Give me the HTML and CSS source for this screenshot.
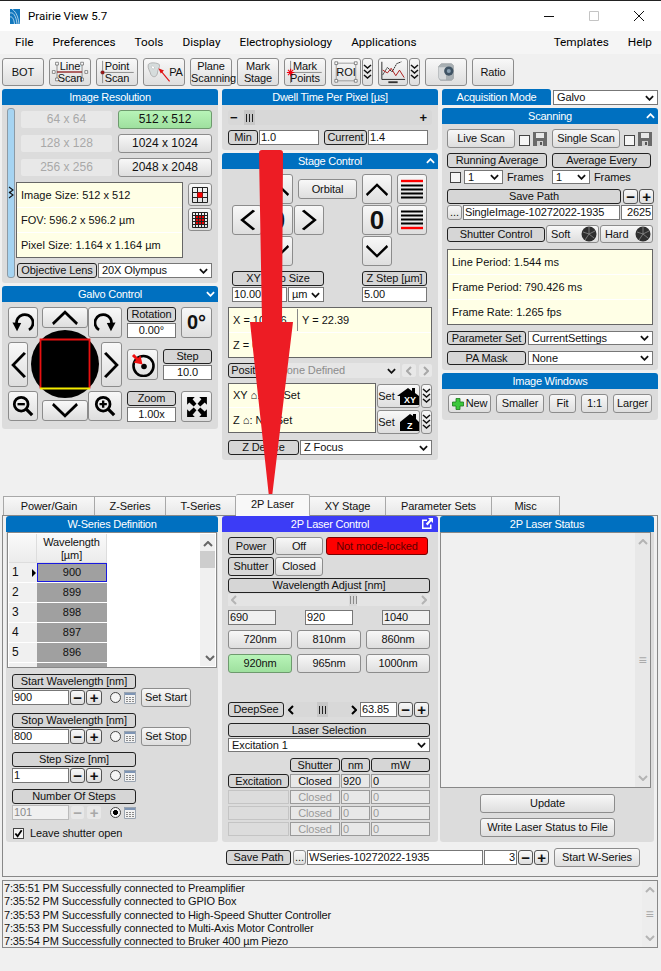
FILE: index.html
```html
<!DOCTYPE html>
<html lang="en">
<head>
    <meta charset="UTF-8">
    <title>Prairie View 5.7</title>
    <link rel="stylesheet" href="styles.css">
</head>
<body>
    <svg class="sprite" aria-hidden="true">
        <symbol id="chev-d" viewBox="0 0 10 6"><polyline points="1,1 5,5 9,1" fill="none" stroke="currentColor" stroke-width="2"/></symbol>
        <symbol id="chev-u" viewBox="0 0 10 6"><polyline points="1,5 5,1 9,5" fill="none" stroke="currentColor" stroke-width="2"/></symbol>
        <symbol id="chev-l" viewBox="0 0 6 10"><polyline points="5,1 1,5 5,9" fill="none" stroke="currentColor" stroke-width="2"/></symbol>
        <symbol id="chev-r" viewBox="0 0 6 10"><polyline points="1,1 5,5 1,9" fill="none" stroke="currentColor" stroke-width="2"/></symbol>
        <symbol id="big-u" viewBox="0 0 30 14" preserveAspectRatio="none"><polyline points="2,13 15,2 28,13" fill="none" stroke="#000" stroke-width="2.800"/></symbol>
        <symbol id="big-d" viewBox="0 0 30 14" preserveAspectRatio="none"><polyline points="2,1 15,12 28,1" fill="none" stroke="#000" stroke-width="2.800"/></symbol>
        <symbol id="big-l" viewBox="0 0 14 30" preserveAspectRatio="none"><polyline points="13,2 2,15 13,28" fill="none" stroke="#000" stroke-width="2.800"/></symbol>
        <symbol id="big-r" viewBox="0 0 14 30" preserveAspectRatio="none"><polyline points="1,2 12,15 1,28" fill="none" stroke="#000" stroke-width="2.800"/></symbol>
        <symbol id="triple" viewBox="0 0 9 16">
            <polyline points="1,1 4.500,4 8,1" fill="none" stroke="#111" stroke-width="1.500"/>
            <polyline points="1,6 4.500,9 8,6" fill="none" stroke="#111" stroke-width="1.500"/>
            <polyline points="1,11 4.500,14 8,11" fill="none" stroke="#111" stroke-width="1.500"/>
        </symbol>
        <symbol id="floppy" viewBox="0 0 14 14">
            <path d="M0 0H14V14H0Z" fill="#6a6a6a"/>
            <path d="M3 1H11V6H3Z" fill="#e8e8e8"/>
            <path d="M4 9H10V14H4Z" fill="#d0d0d0"/>
            <path d="M7 10H9V13H7Z" fill="#555"/>
        </symbol>
        <symbol id="calc" viewBox="0 0 12 12">
            <path d="M0 0H12V12H0Z" fill="#f2f2f2"/>
            <path d="M0 0H12V3H0Z" fill="#7d94b4"/>
            <path d="M0.500 0.500H11.500V11.500H0.500Z" fill="none" stroke="#9aa4b0"/>
            <path d="M2 5h2v1H2zM5 5h2v1H5zM8 5h2v1H8zM2 7h2v1H2zM5 7h2v1H5zM8 7h2v1H8zM2 9h2v1H2zM5 9h2v1H5zM8 9h2v1H8z" fill="#8a8a8a"/>
        </symbol>
        <symbol id="shutter" viewBox="0 0 16 16">
            <circle cx="8" cy="8" r="7.500" fill="#2f2f2f"/>
            <path d="M8 1L8 8M14 5L8 8M13 12L8 8M4 14L8 8M2 6L8 8" stroke="#8a8a8a" stroke-width="0.800"/>
        </symbol>
    </svg>

    <header class="titlebar">
        <svg class="logo" viewBox="0 0 10 15">
            <path d="M0 0H10V15H0Z" fill="#1277bd"/>
            <path d="M0 4C3 3 6 6 7 15M0 8C2 7 4 10 4.500 15M2 0C5 2 8 6 9 15" fill="none" stroke="#cfe6f5" stroke-width="0.800"/>
        </svg>
        <span class="app-name">Prairie View 5.7</span>
        <div class="winctl">
            <svg viewBox="0 0 10 10"><path d="M0 5.500H10" stroke="#111" stroke-width="1"/></svg>
            <svg viewBox="0 0 10 10"><path d="M0.500 0.500H9.500V9.500H0.500Z" fill="none" stroke="#c4c4c4" stroke-width="1"/></svg>
            <svg viewBox="0 0 10 10"><path d="M0 0L10 10M10 0L0 10" stroke="#111" stroke-width="1"/></svg>
        </div>
    </header>

    <nav class="menubar">
        <span>File</span><span>Preferences</span><span>Tools</span><span>Display</span><span>Electrophysiology</span><span>Applications</span>
        <span class="menu-right">Templates</span><span>Help</span>
    </nav>

    <div class="toolbar">
        <button class="btn tool">BOT</button>
        <button class="btn tool">
            <svg class="tool-art" viewBox="0 0 42 28">
                <path d="M7 5V22M34 5V22" stroke="#888"/><path d="M7 14H34" stroke="#8d1a1a" stroke-width="1.400"/>
                <path d="M5.500 3.500h3v3h-3zM32.500 3.500h3v3h-3zM5.500 20.500h3v3h-3zM32.500 20.500h3v3h-3zM2 12.500h3v3H2zM37 12.500h3v3h-3z" fill="#fff" stroke="#555" stroke-width="0.700"/>
            </svg>
            <span class="tool-text">Line<br>Scan</span>
        </button>
        <button class="btn tool">
            <svg class="tool-art" viewBox="0 0 42 28">
                <path d="M5.500 2V26M3 14.500H39" stroke="#888"/><path d="M4 13h3v3H4z" fill="#a11" stroke="#611" stroke-width="0.600"/>
            </svg>
            <span class="tool-text">Point<br>Scan</span>
        </button>
        <button class="btn tool tool-pa">
            <svg class="tool-art" viewBox="0 0 42 28">
                <path d="M4 6C6 3 14 4 16 6C17 9 14 11 14 15C13 20 9 20 7 17C6 13 3 10 4 6Z" fill="#d6dcdc" stroke="#999" stroke-width="0.700"/>
                <path d="M7 8C9 7 11 8 11 10C10 11 8 11 7 8Z" fill="#fff" stroke="#aaa" stroke-width="0.500"/>
                <path d="M27 24L17 12" stroke="#e01010" stroke-width="1.200"/><path d="M15 10L21 12.500L17.500 15.500Z" fill="#e01010"/>
            </svg>
            <span class="tool-text">PA</span>
        </button>
        <button class="btn tool"><span class="tool-text">Plane<br>Scanning</span></button>
        <button class="btn tool"><span class="tool-text">Mark<br>Stage</span></button>
        <button class="btn tool">
            <svg class="tool-art" viewBox="0 0 42 28">
                <path d="M5.500 2V26M3 14.500H39" stroke="#888"/>
                <path d="M5.500 10.500V18.500M1.500 14.500H9.500M2.700 11.700L8.300 17.300M8.300 11.700L2.700 17.300" stroke="#f00010" stroke-width="1.200"/>
            </svg>
            <span class="tool-text">Mark<br>Points</span>
        </button>
        <div class="tool-group">
            <button class="btn tool-sq">
                <svg class="tool-art" viewBox="0 0 30 28">
                    <path d="M4.500 4.500H25.500V23.500H4.500Z" fill="none" stroke="#999"/>
                    <path d="M3 3h3v3H3zM24 3h3v3h-3zM3 22h3v3H3zM24 22h3v3h-3z" fill="#fff" stroke="#555" stroke-width="0.700"/>
                </svg>
                <span class="tool-text">ROI</span>
            </button>
            <button class="btn tool-more"><svg class="triple"><use href="#triple"/></svg></button>
        </div>
        <div class="tool-group">
            <button class="btn tool-sq">
                <svg class="tool-art" viewBox="0 0 30 28">
                    <path d="M3 3V22H28" fill="none" stroke="#222"/>
                    <path d="M4 17L9 9L14 14L19 5L24 3" fill="none" stroke="#222" stroke-dasharray="2 0.600"/>
                    <path d="M4 12L9 15L13 10L18 18L22 12L27 20" fill="none" stroke="#a11"/>
                    <path d="M10 25H20" stroke="#333" stroke-width="2"/>
                </svg>
            </button>
            <button class="btn tool-more"><svg class="triple"><use href="#triple"/></svg></button>
        </div>
        <button class="btn tool">
            <svg class="tool-art" viewBox="0 0 42 28">
                <path d="M13 8L16 5H27L29 7V21L27 23H15L13 20Z" fill="#a9b0b4" stroke="#8a8f92" stroke-width="0.600"/>
                <path d="M13 9H21V22H15L13 20Z" fill="#d5d8da"/>
                <circle cx="24" cy="13" r="5" fill="#3f5364"/><circle cx="24" cy="13" r="2.200" fill="#8aa1b3"/>
            </svg>
        </button>
        <button class="btn tool small-text">Ratio</button>
    </div>

    <div class="upper">
        <div class="col col-left">
            <section class="panel">
                <h2 class="phead">Image Resolution</h2>
                <div class="pbody res-body">
                    <div class="side-bar"><svg class="side-chev" viewBox="0 0 6 14"><path d="M1 1L5 4L1 7M1 6L5 9L1 12" fill="none" stroke="#111" stroke-width="1.100"/></svg></div>
                    <div class="res-main">
                        <div class="res-grid">
                            <button class="btn off">64 x 64</button><button class="btn on">512 x 512</button>
                            <button class="btn off">128 x 128</button><button class="btn">1024 x 1024</button>
                            <button class="btn off">256 x 256</button><button class="btn">2048 x 2048</button>
                        </div>
                        <div class="res-info">
                            <div class="info info-res">
                                <div>Image Size: 512 x 512</div>
                                <div>FOV: 596.2 x 596.2 &micro;m</div>
                                <div>Pixel Size: 1.164 x 1.164 &micro;m</div>
                            </div>
                            <div class="grid-btns">
                                <button class="btn">
                                    <svg class="mini" viewBox="0 0 16 16"><path d="M0.500 0.500H15.500V15.500H0.500ZM5.500 0.500V15.500M10.500 0.500V15.500M0.500 5.500H15.500M0.500 10.500H15.500" fill="none" stroke="#222"/><path d="M5.500 5.500h5v5h-5z" fill="#f00"/></svg>
                                </button>
                                <button class="btn">
                                    <svg class="mini" viewBox="0 0 16 16"><path d="M4 4h8v8H4z" fill="#e00"/><path d="M0.500 0.500H15.500V15.500H0.500ZM3.500 0.500V15.500M6.500 0.500V15.500M9.500 0.500V15.500M12.500 0.500V15.500M0.500 3.500H15.500M0.500 6.500H15.500M0.500 9.500H15.500M0.500 12.500H15.500" fill="none" stroke="#222"/></svg>
                                </button>
                            </div>
                        </div>
                        <div class="obj-row">
                            <div class="lbl">Objective Lens</div>
                            <div class="sel">20X Olympus<svg class="sel-arrow"><use href="#chev-d"/></svg></div>
                        </div>
                    </div>
                </div>
            </section>

            <section class="panel galvo">
                <h2 class="phead">Galvo Control<svg class="fold"><use href="#chev-d"/></svg></h2>
                <div class="pbody galvo-body">
                    <div class="dpad">
                        <button class="btn sq a-rotl">
                            <svg class="ic22" viewBox="0 0 24 24"><path d="M18.500 19.500A9 9 0 1 0 5 13" fill="none" stroke="#000" stroke-width="3"/><path d="M0.500 11.500L10 12L5.500 21Z" fill="#000"/></svg>
                        </button>
                        <button class="btn a-up"><svg class="ic-h"><use href="#big-u"/></svg></button>
                        <button class="btn sq a-rotr">
                            <svg class="ic22" viewBox="0 0 24 24"><path d="M5.500 19.500A9 9 0 1 1 19 13" fill="none" stroke="#000" stroke-width="3"/><path d="M23.500 11.500L14 12L18.500 21Z" fill="#000"/></svg>
                        </button>
                        <button class="btn a-left"><svg class="ic-v"><use href="#big-l"/></svg></button>
                        <div class="a-scope">
                            <svg viewBox="0 0 68 68"><circle cx="34" cy="34" r="34" fill="#000"/>
                                <path d="M9.500 58.500V9.500H58.500V58.500" fill="none" stroke="#e81010" stroke-width="1.800"/>
                                <path d="M9 58.500H59" stroke="#f5ec00" stroke-width="1.800"/></svg>
                        </div>
                        <button class="btn a-right"><svg class="ic-v"><use href="#big-r"/></svg></button>
                        <button class="btn sq a-zout">
                            <svg class="ic22" viewBox="0 0 24 24"><circle cx="10" cy="10" r="7.500" fill="none" stroke="#000" stroke-width="3"/><path d="M15.500 15.500L22 22" stroke="#000" stroke-width="3.500"/><path d="M6 10H14" stroke="#000" stroke-width="2.600"/></svg>
                        </button>
                        <button class="btn a-down"><svg class="ic-h"><use href="#big-d"/></svg></button>
                        <button class="btn sq a-zin">
                            <svg class="ic22" viewBox="0 0 24 24"><circle cx="10" cy="10" r="7.500" fill="none" stroke="#000" stroke-width="3"/><path d="M15.500 15.500L22 22" stroke="#000" stroke-width="3.500"/><path d="M6 10H14M10 6V14" stroke="#000" stroke-width="2.600"/></svg>
                        </button>
                    </div>
                    <div class="galvo-side">
                        <div class="galvo-row">
                            <div class="lv"><div class="lbl">Rotation</div><div class="field center">0.00&deg;</div></div>
                            <button class="btn degree">0&deg;</button>
                        </div>
                        <div class="galvo-row">
                            <button class="btn degree">
                                <svg class="ic24" viewBox="0 0 24 24"><circle cx="12.500" cy="13" r="10" fill="none" stroke="#000" stroke-width="2.600"/><circle cx="13" cy="13.500" r="2.800" fill="#000"/><path d="M2 2L9 9" stroke="#f01010" stroke-width="3"/><path d="M11.500 11.500L2.500 9.500L9.500 2.500Z" fill="#f01010"/></svg>
                            </button>
                            <div class="lv"><div class="lbl">Step</div><div class="field center">10.0</div></div>
                        </div>
                        <div class="galvo-row">
                            <div class="lv"><div class="lbl">Zoom</div><div class="field center">1.00x</div></div>
                            <button class="btn degree">
                                <svg class="ic22" viewBox="0 0 20 20"><path d="M1 1H8L6 3L9.500 7L7 9.500L3 6L1 8ZM19 1V8L17 6L13 9.500L10.500 7L14 3L12 1ZM1 19V12L3 14L7 10.500L9.500 13L6 17L8 19ZM19 19H12L14 17L10.500 13L13 10.500L17 14L19 12Z" fill="#000"/></svg>
                            </button>
                        </div>
                    </div>
                </div>
            </section>
        </div>

        <div class="col col-mid">
            <section class="panel">
                <h2 class="phead">Dwell Time Per Pixel [&micro;s]</h2>
                <div class="pbody dwell-body">
                    <div class="hscroll dwell-scroll"><b>&minus;</b><span class="thumb thumb-start"></span><b class="to-end">+</b></div>
                    <div class="dwell-row">
                        <div class="lbl">Min</div><div class="field">1.0</div>
                        <div class="lbl">Current</div><div class="field">1.4</div>
                    </div>
                </div>
            </section>

            <section class="panel stage">
                <h2 class="phead">Stage Control<svg class="fold"><use href="#chev-u"/></svg></h2>
                <div class="pbody stage-body">
                    <div class="motor">
                        <button class="btn m-xyup"><svg class="ic-h"><use href="#big-u"/></svg></button>
                        <button class="btn m-orbital">Orbital</button>
                        <button class="btn m-zup"><svg class="ic-h"><use href="#big-u"/></svg></button>
                        <button class="btn m-top">
                            <svg class="ic22" viewBox="0 0 22 22"><path d="M0 3H22" stroke="#f00" stroke-width="2.400"/><path d="M0 7.500H22M0 11.500H22M0 15.500H22M0 19.500H22" stroke="#000" stroke-width="2.200"/></svg>
                        </button>
                        <button class="btn m-left"><svg class="ic-v"><use href="#big-l"/></svg></button>
                        <button class="btn m-zero big-zero">0</button>
                        <button class="btn m-right"><svg class="ic-v"><use href="#big-r"/></svg></button>
                        <button class="btn m-zzero big-zero">0</button>
                        <button class="btn m-bottom">
                            <svg class="ic22" viewBox="0 0 22 22"><path d="M0 2.500H22M0 6.500H22M0 10.500H22M0 14.500H22" stroke="#000" stroke-width="2.200"/><path d="M0 19H22" stroke="#f00" stroke-width="2.400"/></svg>
                        </button>
                        <button class="btn m-xydown"><svg class="ic-h"><use href="#big-d"/></svg></button>
                        <button class="btn m-zdown"><svg class="ic-h"><use href="#big-d"/></svg></button>
                    </div>
                    <div class="step-row">
                        <div class="step-xy">
                            <div class="lbl">XY Step Size</div>
                            <div class="step-fields">
                                <div class="field">10.00</div>
                                <div class="sel">&micro;m<svg class="sel-arrow"><use href="#chev-d"/></svg></div>
                            </div>
                        </div>
                        <div class="step-z">
                            <div class="lbl">Z Step [&micro;m]</div>
                            <div class="field step-zval">5.00</div>
                        </div>
                    </div>
                    <div class="info readout">
                        <div class="readout-xy"><span class="read-x">X = 105.06</span><span>Y = 22.39</span></div>
                        <div>Z = 0.00</div>
                    </div>
                    <div class="pos-row">
                        <div class="lbl lbl-pos">Position</div>
                        <div class="sel disabled">None Defined<svg class="sel-arrow"><use href="#chev-d"/></svg></div>
                        <button class="btn pos-nav off"><svg class="tiny-v"><use href="#chev-l"/></svg></button>
                        <button class="btn pos-nav off"><svg class="tiny-v"><use href="#chev-r"/></svg></button>
                    </div>
                    <div class="home-row">
                        <div class="info home-box">
                            <div>XY &#8962;: Not Set</div>
                            <div>Z &#8962;: Not Set</div>
                        </div>
                        <div class="home-btns">
                            <button class="btn home-set">Set
                                <svg class="house" viewBox="0 0 22 18"><path d="M0 9L11 1L15 4V1H18V6L22 9V18H3V9Z" fill="#000"/><text x="7" y="16" class="house-text">XY</text></svg>
                            </button>
                            <button class="btn tool-more"><svg class="triple"><use href="#triple"/></svg></button>
                            <button class="btn home-set">Set
                                <svg class="house" viewBox="0 0 22 18"><path d="M3 9L13 1L16 3V1H19V6L22 9V18H3Z" fill="#000"/><text x="10" y="16" class="house-text">Z</text></svg>
                            </button>
                            <button class="btn tool-more"><svg class="triple"><use href="#triple"/></svg></button>
                        </div>
                    </div>
                    <div class="zdev-row">
                        <div class="lbl">Z Device</div>
                        <div class="sel">Z Focus<svg class="sel-arrow"><use href="#chev-d"/></svg></div>
                    </div>
                </div>
            </section>
        </div>

        <div class="col col-right">
            <div class="acq">
                <div class="phead acq-head">Acquisition Mode</div>
                <div class="sel acq-sel">Galvo<svg class="sel-arrow"><use href="#chev-d"/></svg></div>
            </div>
            <section class="panel scanning">
                <h2 class="phead">Scanning<svg class="fold"><use href="#chev-u"/></svg></h2>
                <div class="pbody scan-body">
                    <div class="scan-row">
                        <button class="btn scan-btn">Live Scan</button><span class="check"></span><svg class="floppy"><use href="#floppy"/></svg>
                        <button class="btn scan-btn">Single Scan</button><span class="check"></span><svg class="floppy"><use href="#floppy"/></svg>
                    </div>
                    <div class="avg-row">
                        <div class="lbl">Running Average</div><div class="lbl">Average Every</div>
                    </div>
                    <div class="frames-row">
                        <span class="check"></span>
                        <div class="sel">1<svg class="sel-arrow"><use href="#chev-d"/></svg></div>
                        <span class="frames-text">Frames</span>
                        <div class="sel">1<svg class="sel-arrow"><use href="#chev-d"/></svg></div>
                        <span>Frames</span>
                    </div>
                    <div class="path-row">
                        <div class="lbl">Save Path</div>
                        <button class="btn pm">&minus;</button><button class="btn pm">+</button>
                    </div>
                    <div class="path-fields">
                        <button class="btn dots">...</button>
                        <div class="field">SingleImage-10272022-1935</div>
                        <div class="field right">2625</div>
                    </div>
                    <div class="shutter-row">
                        <div class="lbl">Shutter Control</div>
                        <button class="btn shut-btn">Soft<svg class="shut"><use href="#shutter"/></svg></button>
                        <button class="btn shut-btn">Hard<svg class="shut"><use href="#shutter"/></svg></button>
                    </div>
                    <div class="info scan-info">
                        <div>Line Period: 1.544 ms</div>
                        <div>Frame Period: 790.426 ms</div>
                        <div>Frame Rate: 1.265 fps</div>
                    </div>
                    <div class="param-row">
                        <div class="lbl">Parameter Set</div>
                        <div class="sel">CurrentSettings<svg class="sel-arrow"><use href="#chev-d"/></svg></div>
                    </div>
                    <div class="param-row">
                        <div class="lbl">PA Mask</div>
                        <div class="sel">None<svg class="sel-arrow"><use href="#chev-d"/></svg></div>
                    </div>
                </div>
            </section>
            <section class="panel windows">
                <h2 class="phead">Image Windows</h2>
                <div class="pbody windows-body">
                    <button class="btn win-new"><svg class="plus-green" viewBox="0 0 12 12"><path d="M4 0.500H8V4H11.500V8H8V11.500H4V8H0.500V4H4Z" fill="#3cc83c" stroke="#1d7a1d" stroke-width="0.800"/></svg>New</button>
                    <button class="btn win-smaller">Smaller</button>
                    <button class="btn win-fit">Fit</button>
                    <button class="btn win-fit">1:1</button>
                    <button class="btn win-larger">Larger</button>
                </div>
            </section>
        </div>
    </div>

    <div class="tabs">
        <div class="tab t1">Power/Gain</div>
        <div class="tab t2">Z-Series</div>
        <div class="tab t3">T-Series</div>
        <div class="tab tab-active">2P Laser</div>
        <div class="tab t5">XY Stage</div>
        <div class="tab t6">Parameter Sets</div>
        <div class="tab t7">Misc</div>
    </div>

    <div class="tabpage">
        <div class="tab-cols">
            <section class="panel">
                <h2 class="phead">W-Series Definition</h2>
                <div class="pbody wseries">
                    <div class="wtable">
                        <div class="wgrid">
                            <div class="wcorner"></div><div class="whead">Wavelength<br>[&micro;m]</div>
                            <div class="wrow-head"><span>1</span><span class="row-mark"></span></div><div class="wcell wcell-sel">900</div>
                            <div class="wrow-head"><span>2</span></div><div class="wcell">899</div>
                            <div class="wrow-head"><span>3</span></div><div class="wcell">898</div>
                            <div class="wrow-head"><span>4</span></div><div class="wcell">897</div>
                            <div class="wrow-head"><span>5</span></div><div class="wcell">896</div>
                            <div class="wrow-head"></div><div class="wcell"></div>
                        </div>
                        <div class="vscroll">
                            <svg class="tiny-h"><use href="#chev-u"/></svg>
                            <span class="vthumb"></span>
                            <svg class="tiny-h to-end"><use href="#chev-d"/></svg>
                        </div>
                    </div>

                    <div class="wblock">
                        <div class="lbl">Start Wavelength [nm]</div><span></span>
                        <div class="wctl">
                            <div class="field">900</div><button class="btn pm">&minus;</button><button class="btn pm">+</button>
                            <span class="radio"></span><svg class="calc"><use href="#calc"/></svg>
                        </div>
                        <button class="btn wset">Set Start</button>
                    </div>
                    <div class="wblock">
                        <div class="lbl">Stop Wavelength [nm]</div><span></span>
                        <div class="wctl">
                            <div class="field">800</div><button class="btn pm">&minus;</button><button class="btn pm">+</button>
                            <span class="radio"></span><svg class="calc"><use href="#calc"/></svg>
                        </div>
                        <button class="btn wset">Set Stop</button>
                    </div>
                    <div class="wblock">
                        <div class="lbl">Step Size [nm]</div><span></span>
                        <div class="wctl">
                            <div class="field">1</div><button class="btn pm">&minus;</button><button class="btn pm">+</button>
                            <span class="radio"></span><svg class="calc"><use href="#calc"/></svg>
                        </div>
                    </div>
                    <div class="wblock">
                        <div class="lbl">Number Of Steps</div><span></span>
                        <div class="wctl">
                            <div class="field field-off">101</div><button class="btn pm off">&minus;</button><button class="btn pm off">+</button>
                            <span class="radio radio-on"></span><svg class="calc"><use href="#calc"/></svg>
                        </div>
                    </div>
                    <div class="leave">
                        <span class="check check-on"><svg viewBox="0 0 10 10"><path d="M1.500 5L4 8L8.500 1.500" fill="none" stroke="#000" stroke-width="2"/></svg></span>
                        Leave shutter open
                    </div>
                </div>
            </section>

            <section class="panel">
                <h2 class="phead phead-laser">2P Laser Control
                    <svg class="popout" viewBox="0 0 13 13"><path d="M1 2.500H6V4H2.500V10.500H9V7.500H10.500V12H1Z" fill="#fff"/><path d="M7 1H12V6L10.200 4.300L6.500 8.500L4.800 6.800L8.700 2.800Z" fill="#fff"/></svg>
                </h2>
                <div class="pbody laser">
                    <div class="power-row">
                        <div class="lbl">Power</div><button class="btn">Off</button><button class="btn lock-alert">Not mode-locked</button>
                    </div>
                    <div class="power-row shutter2">
                        <div class="lbl">Shutter</div><button class="btn">Closed</button>
                    </div>
                    <div class="lbl wl-adjust">Wavelength Adjust [nm]</div>
                    <div class="hscroll wl-scroll">
                        <svg class="tiny-v dim"><use href="#chev-l"/></svg>
                        <span class="thumb thumb-wl"></span>
                        <svg class="tiny-v dim"><use href="#chev-r"/></svg>
                    </div>
                    <div class="wl-fields">
                        <div class="field field-grey">690</div><div class="field">920</div><div class="field field-grey">1040</div>
                    </div>
                    <div class="wl-btns">
                        <button class="btn">720nm</button><button class="btn">810nm</button><button class="btn">860nm</button>
                        <button class="btn on">920nm</button><button class="btn">965nm</button><button class="btn">1000nm</button>
                    </div>
                    <div class="deep-row">
                        <div class="lbl">DeepSee</div>
                        <div class="hscroll deep-scroll">
                            <svg class="tiny-v"><use href="#chev-l"/></svg>
                            <span class="thumb thumb-deep"></span>
                            <svg class="tiny-v"><use href="#chev-r"/></svg>
                        </div>
                        <div class="field">63.85</div>
                        <button class="btn pm">&minus;</button><button class="btn pm">+</button>
                    </div>
                    <div class="lbl las-title">Laser Selection</div>
                    <div class="sel las-sel">Excitation 1<svg class="sel-arrow"><use href="#chev-d"/></svg></div>
                    <div class="las-table">
                        <span></span><div class="lbl">Shutter</div><div class="lbl">nm</div><div class="lbl">mW</div>
                        <div class="lbl">Excitation</div><div class="cell center">Closed</div><div class="cell">920</div><div class="cell">0</div>
                        <div class="cell"></div><div class="cell center dimmed">Closed</div><div class="cell dimmed">0</div><div class="cell dimmed">0</div>
                        <div class="cell"></div><div class="cell center dimmed">Closed</div><div class="cell dimmed">0</div><div class="cell dimmed">0</div>
                        <div class="cell"></div><div class="cell center dimmed">Closed</div><div class="cell dimmed">0</div><div class="cell dimmed">0</div>
                    </div>
                </div>
            </section>

            <section class="panel">
                <h2 class="phead">2P Laser Status</h2>
                <div class="pbody status">
                    <div class="status-box">
                        <div class="vscroll status-scroll">
                            <svg class="tiny-h dim"><use href="#chev-u"/></svg>
                            <span class="grip">&equiv;</span>
                            <svg class="tiny-h dim"><use href="#chev-d"/></svg>
                        </div>
                    </div>
                    <button class="btn status-btn">Update</button>
                    <button class="btn status-btn">Write Laser Status to File</button>
                </div>
            </section>
        </div>

        <div class="save-row">
            <div class="lbl">Save Path</div>
            <button class="btn dots">...</button>
            <div class="field">WSeries-10272022-1935</div>
            <div class="field right">3</div>
            <button class="btn pm">&minus;</button><button class="btn pm">+</button>
            <button class="btn start">Start W-Series</button>
        </div>
    </div>

    <div class="log">
        <div class="log-lines">
            <div>7:35:51 PM Successfully connected to Preamplifier</div>
            <div>7:35:52 PM Successfully connected to GPIO Box</div>
            <div>7:35:53 PM Successfully connected to High-Speed Shutter Controller</div>
            <div>7:35:53 PM Successfully connected to Multi-Axis Motor Controller</div>
            <div>7:35:54 PM Successfully connected to Bruker 400 &micro;m Piezo</div>
        </div>
        <div class="vscroll log-scroll">
            <svg class="tiny-h dim"><use href="#chev-u"/></svg>
            <span class="grip">&equiv;</span>
            <svg class="tiny-h dim"><use href="#chev-d"/></svg>
        </div>
    </div>

    <!-- the red annotation arrow sits on top of everything -->
    <svg class="arrow" viewBox="0 0 661 971"><path d="M259 153Q259 150 262 150H280Q283 150 283 153L282 322H293L272 497H269L250 322H262Z" fill="#ed1c24"/></svg>
</body>
</html>
```

FILE: styles.css
```css
* {
    box-sizing: border-box;
}
body {
    position: relative;
    width: 661px;
    height: 971px;
    margin: 0;
    overflow: hidden;
    background-color: #f0f0f0;
    color: #111;
    font-family: "Liberation Sans", Arial, sans-serif;
    font-size: 11px;
    line-height: 13px;
    letter-spacing: -0.1px;
}
.sprite {
    display: none;
}
.arrow {
    position: absolute;
    top: 0;
    left: 0;
    width: 661px;
    height: 971px;
    pointer-events: none;
}

/* window chrome */
.titlebar {
    display: flex;
    align-items: center;
    height: 31px;
    padding-left: 10px;
    border-top: 1px solid #222;
    background-color: #fff;
}
.logo {
    width: 10px;
    height: 15px;
}
.app-name {
    margin-left: 8px;
    font-family: Roboto, sans-serif;
    font-size: 11.500px;
    letter-spacing: 0;
    color: #000;
}
.winctl {
    display: flex;
    gap: 35px;
    margin-left: auto;
    margin-right: 17px;
}
.winctl svg {
    width: 10px;
    height: 10px;
}
.menubar {
    display: flex;
    gap: 19px;
    align-items: center;
    height: 23px;
    padding: 0 9px 0 15px;
    background-color: #f5f5f5;
    font-family: Roboto, sans-serif;
    font-size: 11.800px;
    letter-spacing: 0;
    color: #000;
}
.menu-right {
    margin-left: auto;
}
.toolbar {
    display: flex;
    gap: 5px;
    height: 34px;
    padding: 4px 0 0 2px;
}
.tool-group {
    display: flex;
    gap: 1px;
}

/* controls */
.btn {
    display: block;
    margin: 0;
    padding: 0;
    border: 1px solid #8c8c8c;
    border-radius: 3px;
    background: linear-gradient(#f8f8f8, #dedede);
    color: #111;
    font: inherit;
    letter-spacing: inherit;
    text-align: center;
}
.btn.off {
    border-color: #dcdcdc;
    background: #e8e8e8;
    color: #a8a8a8;
}
.btn.on {
    border-color: #6e9a6e;
    background: linear-gradient(#b8f4b8, #9ee09e);
}
.lbl {
    height: 15px;
    border: 1px solid #222;
    border-radius: 3px;
    background-color: #d6d6d6;
    text-align: center;
    line-height: 13px;
    white-space: nowrap;
    overflow: hidden;
}
.field {
    height: 15px;
    padding: 0 1px;
    border: 1px solid #777;
    background-color: #fff;
    line-height: 13px;
    white-space: nowrap;
    overflow: hidden;
}
.field.center,
.cell.center {
    text-align: center;
}
.field.right {
    text-align: right;
}
.field-off {
    border-color: #bbb;
    background-color: #f0f0f0;
    color: #8a8a8a;
}
.field-grey {
    background-color: #f0f0f0;
}
.sel {
    display: flex;
    align-items: center;
    justify-content: space-between;
    height: 15px;
    padding: 0 3px;
    border: 1px solid #777;
    background-color: #fff;
    white-space: nowrap;
    overflow: hidden;
}
.sel.disabled {
    border-color: #e6e6e6;
    background-color: #e6e6e6;
    color: #8c8c8c;
}
.sel-arrow {
    flex: none;
    width: 9px;
    height: 6px;
    color: #111;
}
.info {
    border: 1px solid #666;
    background-color: #ffffe6;
}
.info > div {
    display: flex;
    align-items: center;
    padding-left: 4px;
    border-bottom: 1px solid #fff;
}
.info > div:last-child {
    border-bottom: 0;
}
.check {
    display: inline-block;
    flex: none;
    width: 11px;
    height: 11px;
    border: 1px solid #444;
    background-color: #f5f5f5;
}
.floppy {
    flex: none;
    width: 14px;
    height: 14px;
}
.pm {
    width: 15px;
    height: 15px;
    font-size: 15px;
    font-weight: bold;
    line-height: 12px;
    border-color: #555;
}
.dots {
    width: 15px;
    height: 15px;
    line-height: 11px;
}
.triple {
    display: block;
    width: 9px;
    height: 16px;
    margin: auto;
}
.ic22 {
    display: block;
    width: 22px;
    height: 22px;
    margin: auto;
}
.ic24 {
    display: block;
    width: 24px;
    height: 24px;
    margin: auto;
}
.ic-h {
    display: block;
    width: 28px;
    height: 15px;
    margin: auto;
}
.ic-v {
    display: block;
    width: 15px;
    height: 28px;
    margin: auto;
}
.tiny-v {
    display: block;
    width: 6px;
    height: 10px;
    margin: auto;
}
.tiny-h {
    display: block;
    flex: none;
    width: 10px;
    height: 6px;
}
.dim {
    color: #b4b4b4;
}
.hscroll {
    display: flex;
    align-items: center;
    background-color: #d8d8d8;
}
/* three grip bars in the middle of a scrollbar thumb */
.thumb {
    display: block;
    background-color: #c8c8c8;
    background-image: repeating-linear-gradient(90deg, #222 0 1px, transparent 1px 3px);
    background-position: center;
    background-repeat: no-repeat;
    background-size: 7px 8px;
}
.vscroll {
    display: flex;
    flex-direction: column;
    align-items: center;
    flex: none;
    width: 15px;
    background-color: #f0f0f0;
}
.grip {
    margin: auto 0;
    color: #aaa;
    font-size: 14px;
}

/* toolbar buttons */
.tool {
    position: relative;
    width: 42px;
    height: 28px;
    line-height: 12px;
}
.tool-sq {
    position: relative;
    width: 30px;
    height: 28px;
}
.tool-more {
    width: 11px;
    height: 28px;
}
.tool-art {
    position: absolute;
    top: 0;
    left: 0;
    width: 100%;
    height: 100%;
}
.tool-text {
    position: relative;
}
.tool-pa .tool-text {
    display: block;
    margin-left: 24px;
}

/* layout of the upper part */
.upper {
    display: flex;
    gap: 4px;
    height: 407px;
    padding-left: 2px;
}
.col {
    width: 216px;
    padding-top: 1px;
}
.phead {
    position: relative;
    height: 16px;
    margin: 0;
    border-radius: 3px 3px 0 0;
    background-color: #0070c0;
    color: #fff;
    font-size: 11px;
    font-weight: normal;
    letter-spacing: -0.250px;
    line-height: 16px;
    text-align: center;
}
.phead-laser {
    background-color: #3c3cf6;
}
.pbody {
    border-radius: 0 0 3px 3px;
    background-color: #dcdcdc;
}
.fold {
    position: absolute;
    top: 5px;
    right: 3px;
    width: 9px;
    height: 6px;
    color: #fff;
}
.popout {
    position: absolute;
    top: 1px;
    right: 4px;
    width: 13px;
    height: 13px;
}

/* image resolution */
.res-body {
    display: flex;
    height: 178px;
    padding: 3px 0 0 5px;
}
.side-bar {
    display: flex;
    align-items: center;
    flex: none;
    width: 8px;
    height: 170px;
    border: 1px solid #8c9aa5;
    border-radius: 3px;
    background-color: #a6d4f2;
}
.side-chev {
    width: 6px;
    height: 14px;
}
.res-main {
    width: 196px;
    margin-left: 1px;
}
.res-grid {
    display: grid;
    grid-template-columns: 93px 94px;
    grid-auto-rows: 19px;
    gap: 5px;
    margin: 2px 0 0 4px;
    font-size: 12px;
    letter-spacing: 0;
}
.res-info {
    display: flex;
    gap: 5px;
    margin-top: 5px;
    letter-spacing: 0;
}
.info-res {
    width: 167px;
    height: 76px;
}
.info-res > div,
.scan-info > div {
    height: 25px;
}
.grid-btns {
    display: flex;
    flex-direction: column;
    gap: 2px;
    padding-top: 1px;
}
.grid-btns .btn {
    width: 24px;
    height: 23px;
}
.mini {
    display: block;
    width: 16px;
    height: 16px;
    margin: auto;
}
.obj-row {
    display: grid;
    grid-template-columns: 80px 114px;
    gap: 1px;
    margin: 5px 0 0 1px;
}

/* galvo */
.galvo {
    margin-top: 3px;
}
.galvo-body {
    display: flex;
    gap: 5px;
    height: 127px;
    padding: 5px 0 0 6px;
}
.dpad {
    display: grid;
    grid-template-columns: 20px 10px 4px 46px 3px 10px 21px;
    grid-template-rows: 21px 10px 4px 45px 4px 9px 21px;
    width: 114px;
    height: 114px;
}
.a-rotl { grid-area: 1 / 1 / 3 / 3; }
.a-up { grid-area: 1 / 4 / 2 / 5; }
.a-rotr { grid-area: 1 / 5 / 3 / 8; }
.a-left { grid-area: 4 / 1 / 5 / 2; }
.a-right { grid-area: 4 / 7 / 5 / 8; }
.a-zout { grid-area: 6 / 1 / 8 / 3; }
.a-down { grid-area: 7 / 4 / 8 / 5; }
.a-zin { grid-area: 6 / 5 / 8 / 8; }
.a-scope {
    grid-area: 2 / 1 / 7 / 8;
    justify-self: center;
    align-self: center;
    width: 68px;
    height: 68px;
}
.a-scope svg {
    display: block;
}
.galvo-side {
    display: flex;
    flex-direction: column;
    gap: 11px;
    width: 85px;
}
.galvo-row {
    display: flex;
    justify-content: space-between;
}
.lv {
    display: flex;
    flex-direction: column;
    gap: 1px;
    width: 49px;
}
.degree {
    width: 31px;
    height: 31px;
    font-size: 20px;
    font-weight: bold;
}

/* dwell */
.dwell-body {
    height: 45px;
    padding: 5px 6px;
}
.dwell-scroll {
    height: 15px;
    padding: 0 5px 0 2px;
    border-radius: 3px;
}
.dwell-scroll b {
    font-size: 13px;
    line-height: 13px;
}
.to-end {
    margin-left: auto;
}
.thumb-start {
    width: 11px;
    height: 15px;
    margin-left: 6px;
}
.dwell-row {
    display: grid;
    grid-template-columns: 30px 60px 47px 60px;
    column-gap: 1px;
    margin-top: 5px;
}
.dwell-row .lbl:nth-child(3) {
    margin-left: 4px;
    width: 43px;
}

/* stage */
.stage {
    margin-top: 3px;
}
.stage-body {
    height: 291px;
    padding: 0 6px;
}
.motor {
    display: grid;
    grid-template-columns: 30px 30px 30px 36px 30px 3px 30px;
    grid-auto-rows: 30px;
    gap: 1px;
    padding: 5px 0 0 4px;
}
.motor .big-zero {
    font-size: 26px;
    font-weight: bold;
    line-height: 28px;
}
.motor .ic-h {
    width: 24px;
    height: 13px;
}
.motor .ic-v {
    width: 15px;
    height: 22px;
}
.m-xyup { grid-area: 1 / 2; }
.m-orbital {
    grid-area: 1 / 3 / 2 / 5;
    align-self: center;
    height: 20px;
    margin: 0 4px;
}
.m-zup { grid-area: 1 / 5; }
.m-top { grid-area: 1 / 7; }
.m-left { grid-area: 2 / 1; }
.m-zero { grid-area: 2 / 2; }
.m-right { grid-area: 2 / 3; }
.m-zzero { grid-area: 2 / 5; }
.m-bottom { grid-area: 2 / 7; }
.m-xydown { grid-area: 3 / 2; }
.m-zdown { grid-area: 3 / 5; }
.step-row {
    display: flex;
    gap: 38px;
    margin: 5px 0 0 4px;
}
.step-xy {
    width: 92px;
}
.step-z {
    width: 65px;
}
.step-fields {
    display: grid;
    grid-template-columns: 55px 36px;
    gap: 1px;
    margin-top: 1px;
}
.step-zval {
    margin-top: 1px;
}
.readout {
    height: 51px;
    margin-top: 5px;
    letter-spacing: 0;
}
.readout > div {
    height: 25px;
}
.read-x {
    width: 65px;
    margin-right: 4px;
    border-right: 1px solid #888;
    line-height: 22px;
}
.readout-xy {
    align-items: center;
}
.pos-row {
    display: grid;
    grid-template-columns: 45px 126px 16px 15px;
    gap: 1px;
    margin-top: 5px;
}
.pos-row .sel {
    margin-left: 1px;
}
.pos-nav {
    height: 15px;
}
.home-row {
    display: flex;
    gap: 1px;
    margin-top: 5px;
    letter-spacing: 0;
}
.home-box {
    width: 148px;
    height: 50px;
}
.home-box > div {
    height: 24px;
}
.home-btns {
    display: grid;
    grid-template-columns: 43px 11px;
    grid-auto-rows: 24px;
    gap: 2px 1px;
    padding-top: 1px;
}
.home-btns .tool-more {
    height: 24px;
}
.home-set {
    display: flex;
    align-items: center;
    justify-content: center;
    gap: 2px;
}
.house {
    width: 22px;
    height: 18px;
}
.house-text {
    fill: #fff;
    font-size: 9px;
    font-weight: bold;
}
.zdev-row {
    display: grid;
    grid-template-columns: 71px 132px;
    gap: 1px;
    margin-top: 6px;
}

/* scanning */
.acq {
    display: flex;
    gap: 2px;
}
.acq-head {
    width: 109px;
}
.acq-sel {
    width: 105px;
    margin-top: 1px;
}
.scanning {
    margin-top: 3px;
}
.scan-body {
    height: 246px;
    padding: 5px 0 0 5px;
}
.scan-row {
    display: flex;
    align-items: flex-end;
    height: 19px;
}
.scan-btn {
    width: 68px;
    height: 19px;
    margin-left: 5px;
}
.scan-row .scan-btn:first-child {
    margin-left: 0;
}
.scan-row .check {
    margin: 0 3px 2px 4px;
}
.scan-row .floppy {
    margin-bottom: 2px;
}
.avg-row {
    display: grid;
    grid-template-columns: 100px 99px;
    gap: 5px;
    margin-top: 5px;
}
.frames-row {
    display: flex;
    align-items: center;
    height: 14px;
    margin: 2px 0 0 3px;
}
.frames-row .sel:nth-child(2) {
    width: 39px;
    margin: 0 4px 0 3px;
}
.frames-row .sel:nth-child(4) {
    width: 38px;
    margin-right: 4px;
}
.frames-row .sel {
    height: 14px;
}
.frames-text {
    width: 45px;
}
.path-row {
    display: flex;
    gap: 1px;
    margin-top: 5px;
}
.path-row .lbl {
    width: 174px;
    margin-right: 1px;
}
.path-fields {
    display: grid;
    grid-template-columns: 15px 157px 32px;
    gap: 1px;
    margin-top: 1px;
}
.shutter-row {
    display: flex;
    align-items: center;
    gap: 1px;
    height: 18px;
    margin-top: 5px;
}
.shutter-row .lbl {
    width: 98px;
}
.shut-btn {
    display: flex;
    align-items: center;
    justify-content: space-between;
    width: 53px;
    height: 18px;
    padding: 0 1px 0 4px;
}
.shut {
    width: 16px;
    height: 16px;
}
.scan-info {
    width: 206px;
    height: 76px;
    margin-top: 6px;
    letter-spacing: 0;
}
.param-row {
    display: grid;
    grid-template-columns: 79px 125px;
    gap: 2px;
    margin-top: 6px;
}
.param-row .lbl,
.param-row .sel {
    height: 14px;
    line-height: 12px;
}
.windows {
    margin-top: 3px;
}
.windows-body {
    display: flex;
    gap: 5px;
    height: 31px;
    padding: 5px 6px;
}
.windows-body .btn {
    height: 19px;
}
.win-new {
    display: flex;
    align-items: center;
    justify-content: center;
    gap: 2px;
    width: 43px;
}
.plus-green {
    width: 12px;
    height: 12px;
}
.win-smaller {
    width: 48px;
}
.win-fit {
    width: 27px;
}
.win-larger {
    width: 39px;
}

/* tabs */
.tabs {
    display: flex;
    align-items: flex-end;
    height: 20px;
    padding-left: 3px;
}
.tab {
    height: 19px;
    border: 1px solid #a8a8a8;
    border-bottom: 0;
    border-left: 0;
    background: linear-gradient(#f8f8f8, #e8e8e8);
    text-align: center;
    line-height: 18px;
}
.t1 { width: 92px; border-left: 1px solid #a8a8a8; }
.t2 { width: 71px; }
.t3 { width: 70px; }
.t5 { width: 76px; }
.t6 { width: 106px; }
.t7 { width: 68px; }
.tab-active {
    position: relative;
    z-index: 1;
    width: 74px;
    height: 22px;
    margin-bottom: -1px;
    border-radius: 2px 2px 0 0;
    background: #f8f8f8;
}
.tabpage {
    height: 362px;
    margin: 0 3px 0 2px;
    border: 1px solid #888;
}
.tab-cols {
    display: grid;
    grid-template-columns: 212px 216px 212px;
    column-gap: 4px;
    padding-left: 3px;
}
.tab-cols .panel:last-child {
    margin-left: -2px;
}

/* w-series */
.wseries {
    height: 310px;
}
.wtable {
    display: flex;
    justify-content: space-between;
    width: 210px;
    height: 136px;
    margin-left: 1px;
    padding: 1px 1px 0 1px;
    border: 1px solid #888;
    background-color: #fff;
    overflow: hidden;
}
.wgrid {
    display: grid;
    grid-template-columns: 28px 70px;
    grid-template-rows: 29px repeat(6, 20px);
    width: 98px;
}
.wcorner,
.whead {
    background: linear-gradient(#fafafa, #ececec);
    border-right: 1px solid #ddd;
    border-bottom: 1px solid #ddd;
}
.whead {
    padding-top: 2px;
    text-align: center;
}
.wrow-head {
    display: flex;
    align-items: center;
    padding-left: 3px;
    border-bottom: 1px solid #fff;
    background-color: #f0f0f0;
    font-size: 12px;
}
.row-mark {
    width: 0;
    height: 0;
    margin-left: 13px;
    border-left: 4px solid #000;
    border-top: 4px solid transparent;
    border-bottom: 4px solid transparent;
}
.wcell {
    height: 19px;
    background-color: #a0a0a0;
    text-align: center;
    line-height: 18px;
    letter-spacing: 0;
}
.wcell-sel {
    border: 1px solid #1a1ae0;
    line-height: 17px;
}
.wtable .vscroll {
    height: 132px;
    padding-top: 7px;
}
.wtable .tiny-h {
    color: #666;
}
.vthumb {
    width: 15px;
    height: 17px;
    margin-top: 4px;
    background-color: #cdcdcd;
}
.wtable .to-end {
    margin-top: auto;
    margin-bottom: 5px;
}
.wblock {
    display: grid;
    grid-template-columns: 124px 50px;
    gap: 1px 5px;
    margin: 6px 0 0 6px;
}
.wctl {
    display: flex;
    align-items: center;
    height: 15px;
}
.wctl .field {
    width: 57px;
    margin-right: 1px;
}
.wctl .pm + .pm {
    width: 16px;
    margin-left: 1px;
}
.radio {
    width: 11px;
    height: 11px;
    margin: 0 3px 0 8px;
    border: 1px solid #444;
    border-radius: 50%;
    background-color: #f5f5f5;
}
.radio-on {
    background: radial-gradient(circle, #000 2.200px, #f5f5f5 2.800px);
}
.calc {
    width: 12px;
    height: 12px;
}
.wset {
    height: 19px;
    margin-top: -2px;
    white-space: nowrap;
}
.leave {
    display: flex;
    align-items: center;
    gap: 6px;
    margin: 7px 0 0 7px;
    height: 12px;
}
.check-on svg {
    display: block;
    width: 9px;
    height: 9px;
}

/* 2p laser */
.laser {
    height: 310px;
    padding: 5px 8px 0 6px;
}
.power-row {
    display: grid;
    grid-template-columns: 46px 48px 104px;
    grid-auto-rows: 18px;
    gap: 1px;
}
.power-row .lbl {
    height: 100%;
    line-height: 16px;
}
.shutter2 {
    grid-auto-rows: 19px;
    margin-top: 2px;
}
.lock-alert {
    margin-left: 2px;
    border-color: #7a0000;
    background: #ff0000;
    color: #5c0000;
}
.wl-adjust {
    margin-top: 2px;
}
.wl-scroll {
    justify-content: space-between;
    height: 12px;
    margin-top: 1px;
    padding: 0 3px;
    background-color: #e4e4e4;
}
.wl-scroll .tiny-v {
    margin: 0;
}
.thumb-wl {
    width: 8px;
    height: 12px;
    margin: 0 auto 0 112px;
    background-color: #d8d8d8;
    background-image: repeating-linear-gradient(90deg, #8a8a8a 0 1px, transparent 1px 3px);
}
.wl-fields {
    display: flex;
    justify-content: space-between;
    margin-top: 4px;
}
.wl-fields .field {
    width: 48px;
}
.wl-btns {
    display: grid;
    grid-template-columns: 64px 64px 64px;
    grid-auto-rows: 19px;
    gap: 5px;
    margin-top: 5px;
}
.deep-row {
    display: grid;
    grid-template-columns: 56px 74px 37px 15px 15px;
    gap: 1px;
    margin-top: 29px;
}
.deep-scroll {
    height: 15px;
    margin-left: 1px;
    justify-content: space-between;
    padding: 0 2px;
    color: #000;
}
.deep-scroll .tiny-v {
    margin: 0;
}
.thumb-deep {
    width: 11px;
    height: 15px;
}
.las-title {
    height: 14px;
    margin-top: 6px;
    line-height: 12px;
}
.las-sel {
    height: 14px;
    margin-top: 1px;
}
.las-table {
    display: grid;
    grid-template-columns: 61px 50px 29px 59px;
    grid-auto-rows: 14px;
    gap: 2px 1px;
    margin-top: 6px;
}
.las-table .lbl {
    height: 14px;
    line-height: 12px;
}
.cell {
    padding: 0 1px;
    border: 1px solid #9a9a9a;
    background-color: #e8e8e8;
    line-height: 12px;
}
.dimmed {
    color: #999;
}
.cell:empty {
    border-color: #c4c4c4;
    background-color: #dcdcdc;
}

/* status */
.status {
    height: 310px;
}
.status-box {
    display: flex;
    justify-content: flex-end;
    width: 211px;
    height: 256px;
    border: 1px solid #888;
    background-color: #f0f0f0;
}
.status-scroll {
    height: 100%;
    padding: 6px 0;
    background-color: #e8e8e8;
}
.status-btn {
    width: 135px;
    height: 19px;
    margin: 5px 0 0 40px;
}
.status-box + .status-btn {
    margin-top: 6px;
}

/* bottom rows */
.save-row {
    display: grid;
    grid-template-columns: 65px 13px 177px 33px 15px 15px 90px;
    align-items: center;
    column-gap: 1px;
    margin: 6px 0 0 223px;
}
.save-row .lbl {
    margin-right: 1px;
    width: 65px;
}
.save-row .dots {
    width: 13px;
    margin-left: 1px;
}
.save-row .field:nth-child(3) {
    margin-left: 1px;
}
.start {
    height: 19px;
    margin-left: 4px;
}
.log {
    display: flex;
    justify-content: space-between;
    height: 68px;
    margin: 3px 3px 0 2px;
    border: 1px solid #888;
}
.log-lines {
    padding: 1px 0 0 1px;
    line-height: 13.300px;
    letter-spacing: -0.150px;
}
.log-scroll {
    height: 66px;
    padding: 6px 0;
    background-color: #ededed;
}
```
